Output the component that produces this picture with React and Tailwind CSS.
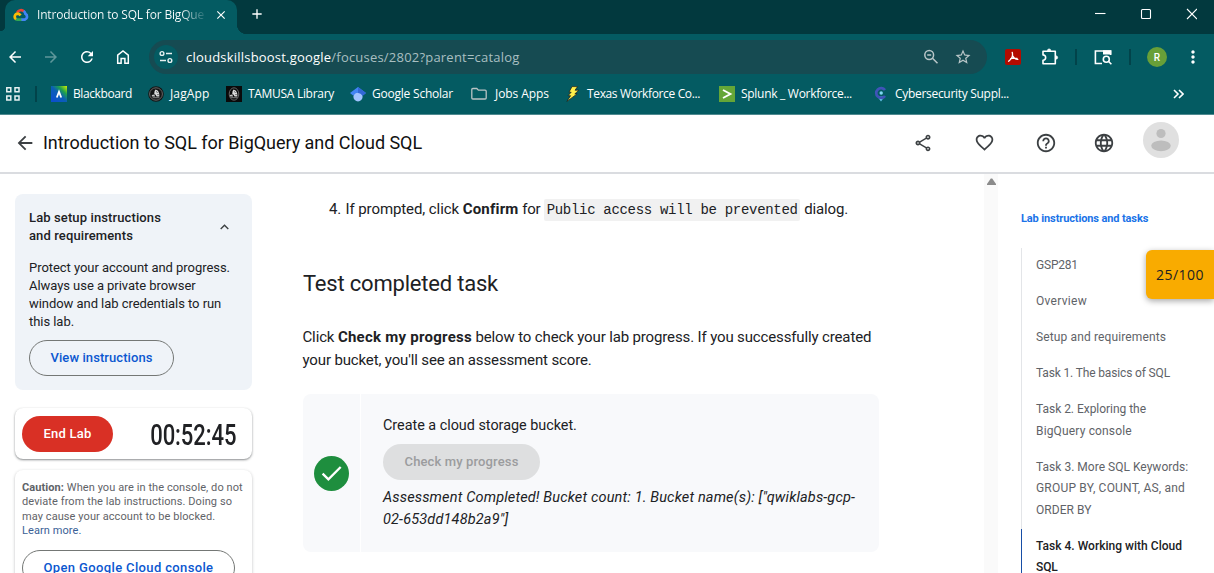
import {
  MdArrowBack, MdArrowForward, MdRefresh, MdOutlineShare, MdFavoriteBorder, MdHelpOutline,
  MdLanguage, MdStarBorder, MdClose, MdAdd, MdMoreVert,
} from 'react-icons/md'

function CloudLogo() {
  return (
    <svg className="h-[14px] w-4 shrink-0" viewBox="0 0 16 14" fill="none" strokeWidth="2.7">
      <path d="M4.2 4.6A4.3 4.3 0 0 1 11 3.4" stroke="#ea4335" />
      <path d="M10.6 3A4.6 4.6 0 0 1 12.4 5.8A3.2 3.2 0 0 1 12 11.6H8" stroke="#4285f4" />
      <path d="M8.4 11.6H4.4A3 3 0 0 1 2.6 11" stroke="#34a853" />
      <path d="M3 11.2A3.1 3.1 0 0 1 4.6 5.6C6 5.6 6.8 6.4 7.6 7.4" stroke="#fbbc04" />
    </svg>
  )
}

function TuneIcon() {
  return (
    <svg className="h-4 w-4" viewBox="0 0 16 16" fill="none" stroke="#e6f0f0" strokeWidth="1.4">
      <circle cx="4" cy="4.5" r="1.9" />
      <path d="M8 4.5h6M2 11.5h6" />
      <circle cx="11.9" cy="11.5" r="1.9" />
    </svg>
  )
}

function BlackboardIcon() {
  return (
    <svg className="h-4 w-4" viewBox="0 0 16 16">
      <defs>
        <linearGradient id="bb" x1="1" y1="0" x2="0.1" y2="0.9">
          <stop offset="0" stopColor="#d5ee00" />
          <stop offset="0.3" stopColor="#1fa34a" />
          <stop offset="0.55" stopColor="#0b5fb5" />
          <stop offset="1" stopColor="#0b4fd0" />
        </linearGradient>
      </defs>
      <path d="M0 0h16v16H0z" fill="url(#bb)" />
      <path d="M5.8 11.5L8 5.8l2.2 5.7" stroke="#fff" strokeWidth="1.8" fill="none" />
    </svg>
  )
}

function JagIcon({ square }) {
  return (
    <svg className="h-4 w-4" viewBox="0 0 16 16">
      {square ? <path d="M0 0h16v16H0z" fill="#0a0a0a" /> : <circle cx="8" cy="8" r="7.8" fill="#141414" />}
      <ellipse cx="8" cy="8" rx={square ? 4.8 : 6.4} ry="6.2" fill="none" stroke="#6f6f6f" strokeWidth="0.9" />
      <path d="M7.6 3.4l2.4 1.4 1.2 2.6.2 3H8.6L7.4 8.600 6.200 8.200 6.600 5z" fill="#dcdcdc" />
      <path d="M3.900 9l2.300-.6 1 2.200H3.900z" fill="#c4c4c4" />
      <path d="M4.600 11.700h6.800" stroke="#8d8d8d" strokeWidth="0.9" />
      <path d="M8.200 5.600l1.300.9M9.400 8.600h1.200" stroke="#141414" strokeWidth="0.800" />
    </svg>
  )
}

function ScholarIcon() {
  return (
    <svg className="h-4 w-4" viewBox="0 0 16 16">
      <circle cx="8" cy="10.8" r="4.6" fill="#a0c3ff" />
      <path d="M8 1L16 7l-3.4 2.7a5 5 0 0 0-9.2 0L0 7z" fill="#4285f4" />
      <path d="M3.4 9.700a5 5 0 0 1 9.200 0 5 5 0 0 0-9.200 0z" fill="#76a7fa" />
      <path d="M8 1l8 6-3.400 2.700A5 5 0 0 0 8 6.900z" fill="#3367d6" />
    </svg>
  )
}

function FolderIcon() {
  return (
    <svg className="h-4 w-4" viewBox="0 0 16 16" fill="none" stroke="#b9c4c5" strokeWidth="1.3">
      <path d="M.8 3.6c0-.7.4-1.1 1.1-1.1h3.9l1.6 1.7h6.700c.7 0 1.100.4 1.100 1.100v6.600c0 .7-.4 1.100-1.100 1.100H1.900c-.7 0-1.100-.4-1.100-1.100z" />
    </svg>
  )
}

function BoltIcon() {
  return (
    <svg className="h-4 w-4" viewBox="0 0 16 16">
      <path d="M7 .6h5.600L10 4.200h3.800L9.800 7.900h2.300L1.900 15.400 5.600 9.700H3l3.200-3.500H4z" fill="#ffef4a" stroke="#1a1a1a" strokeWidth="0.700" />
    </svg>
  )
}

function SplunkIcon() {
  return (
    <svg className="h-4 w-4" viewBox="0 0 16 16">
      <path d="M0 0h16v16H0z" fill="#65a637" />
      <path d="M4 4l7.4 4L4 12" stroke="#fff" strokeWidth="1.9" fill="none" />
    </svg>
  )
}

function PinIcon() {
  return (
    <svg className="h-4 w-4" viewBox="0 0 16 16">
      <path d="M4.400 10.600h7.200L8 15.400z" fill="#63c5ea" />
      <path d="M12 4A4.900 4.900 0 1 0 12 10" stroke="#4054b8" strokeWidth="2.700" fill="none" />
      <circle cx="8.200" cy="7" r="1.700" fill="#7fd8f2" />
    </svg>
  )
}

const bookmarks = [
  { icon: <BlackboardIcon />, label: 'Blackboard', cls: 'w-[97px] gap-1.5 tracking-[-0.4px]' },
  { icon: <JagIcon />, label: 'JagApp', cls: 'w-[78px] gap-1.5 tracking-[0.15px]' },
  { icon: <JagIcon square />, label: 'TAMUSA Library', cls: 'w-[124px] gap-1.5 tracking-[-0.3px]' },
  { icon: <ScholarIcon />, label: 'Google Scholar', cls: 'w-[121px] gap-1.5 tracking-[-0.22px]' },
  { icon: <FolderIcon />, label: 'Jobs Apps', cls: 'w-[94px] gap-2 tracking-[-0.07px]' },
  { icon: <BoltIcon />, label: 'Texas Workforce Co...', cls: 'w-[154px] gap-1.5 tracking-[-0.36px]' },
  { icon: <SplunkIcon />, label: 'Splunk _ Workforce...', cls: 'w-[154px] gap-1.5 tracking-[-0.29px]' },
  { icon: <PinIcon />, label: 'Cybersecurity Suppl...', cls: 'w-[150px] gap-1.5 tracking-[-0.3px]' },
]

function TabStrip() {
  return (
    <div className="flex h-[34px] bg-[#02393e]">
      <div className="relative ml-[5px] flex w-[232px] items-center rounded-t-[10px] bg-[#045b62] pb-[5px] pl-2">
        <CloudLogo />
        <span className="ml-2 w-[168px] whitespace-nowrap bg-gradient-to-r from-white from-85% to-white/10 bg-clip-text text-[12px] tracking-[-0.18px] text-transparent">
          Introduction to SQL for BigQue
        </span>
        <MdClose className="ml-[9px] h-[14px] w-[14px] text-white" />
        <span className="absolute -right-[10px] bottom-0 h-[10px] w-[10px] bg-[radial-gradient(circle_at_100%_0,#02393e_10px,#045b62_10.5px)]" />
        <span className="absolute -left-[5px] bottom-0 h-[8px] w-[5px] bg-[radial-gradient(circle_at_0_0,#02393e_5px,#045b62_5.5px)]" />
      </div>
      <MdAdd className="ml-[12px] mt-[6px] h-4 w-4 text-white" />
      <svg className="ml-auto mr-[17px] mt-[8px] h-3 w-[103px]" viewBox="0 0 103 12" fill="none" stroke="#fff" strokeWidth="1.1">
        <path d="M1 5.5h10.5" />
        <rect x="47.5" y="1.5" width="9" height="9" rx="1" />
        <path d="M93 1l10 10M103 1l-10 10" />
      </svg>
    </div>
  )
}

function Toolbar() {
  return (
    <div className="flex h-[46px] items-center bg-[#045b62] text-white">
      <div className="flex w-[149px] gap-[18px] pl-[6px]">
        <MdArrowBack className="h-[18px] w-[18px]" />
        <MdArrowForward className="h-[18px] w-[18px] text-[#5f979b]" />
        <MdRefresh className="h-[18px] w-[18px]" />
        <svg className="h-[18px] w-[18px]" viewBox="0 0 18 18" fill="none" stroke="#fff" strokeWidth="1.5">
          <path d="M3.700 7.100L9 3l5.300 4.100v8.200H10.900v-4.800H7.100v4.800H3.700z" />
        </svg>
      </div>
      <div className="flex h-[34px] w-[838px] items-center rounded-full bg-[#164b52] pl-[5px]">
        <span className="flex h-6 w-6 items-center justify-center rounded-full bg-[#045b62]">
          <TuneIcon />
        </span>
        <span className="ml-2 mt-px text-[13px] tracking-[0.21px] text-[#a9bfc1]">
          <span className="text-white">cloudskillsboost.google</span>/focuses/2802?parent=catalog
        </span>
        <div className="ml-auto mr-[15px] flex items-center gap-[15px] text-[#b9c6c8]">
          <svg className="h-4 w-4" viewBox="0 0 16 16" fill="none" stroke="currentColor" strokeWidth="1.5">
            <circle cx="6.2" cy="6" r="4.4" />
            <path d="M4.2 6h4M9.5 9.3l5 5" />
          </svg>
          <MdStarBorder className="h-[18px] w-[18px]" />
        </div>
      </div>
      <svg className="ml-[18px] h-4 w-4" viewBox="0 0 16 16">
        <rect width="16" height="16" rx="2" fill="#b30b00" />
        <path d="M7.200 3.300C8.100 6.200 7.500 9 3.600 12.200M7.600 6.700c.9 2.100 2.600 3.400 5.200 3.700M5.700 9.700c1.800-.7 3.900-.9 6.300-.3" fill="none" stroke="#fff" strokeWidth="1.300" strokeLinecap="round" />
      </svg>
      <svg className="ml-5 h-[18px] w-[18px]" viewBox="0 0 18 18" fill="none" stroke="#fff" strokeWidth="1.600" strokeLinejoin="round">
        <path d="M2 3.300H14.300V15.700H2V12.200A2.500 2.500 0 0 0 2 6.900z" />
        <path d="M6.500 2.600a1.600 1.600 0 0 1 3.200 0zM15 7.900a1.600 1.600 0 0 1 0 3.200z" fill="#fff" strokeWidth="0.8" />
      </svg>
      <span className="ml-[16px] h-4 w-[2px] bg-[#02434a]" />
      <svg className="ml-[17px] h-[18px] w-[18px]" viewBox="0 0 18 18" fill="none" stroke="#fff" strokeWidth="1.6">
        <path d="M8 15.500H1.400V3H16.600V7" />
        <path d="M9 2.300h8.300V6.500H9z" fill="#fff" stroke="none" />
        <circle cx="12.300" cy="11.200" r="3" />
        <path d="M14.400 13.300l3 3" />
      </svg>
      <span className="ml-[17px] h-4 w-[2px] bg-[#02434a]" />
      <span className="ml-4 flex h-5 w-5 items-center justify-center rounded-full bg-[#689f38] font-['Roboto'] text-[10px] font-medium">R</span>
      <MdMoreVert className="ml-[16px] h-5 w-5" />
    </div>
  )
}

function BookmarksBar() {
  return (
    <div className="flex h-[35px] items-center border-b border-[#4f8a90] bg-[#045b62] pb-[7px] text-[12px] text-white">
      <svg className="ml-[5px] h-4 w-4" viewBox="0 0 16 16" fill="none" stroke="#e8f2f2" strokeWidth="1.5">
        <path d="M1.800 1.800h4v4h-4zM10 1.800h4v4h-4zM1.800 10h4v4h-4zM10 10h4v4h-4z" />
      </svg>
      <span className="ml-[14px] mr-[14px] h-4 w-[2px] bg-[#02434a]" />
      {bookmarks.map((b) => (
        <div key={b.label} className={`flex shrink-0 items-center whitespace-nowrap ${b.cls}`}>
          {b.icon}
          <span>{b.label}</span>
        </div>
      ))}
      <svg className="ml-auto mr-[30px] h-[10px] w-[11px]" viewBox="0 0 11 10" fill="none" stroke="#fff" strokeWidth="1.6">
        <path d="M1 1l4 4-4 4M6 1l4 4-4 4" />
      </svg>
    </div>
  )
}

function LabHeader() {
  return (
    <header className="flex h-[59px] items-center border-b-2 border-[#dadce0] pb-[2px] text-[#3c4043]">
      <MdArrowBack className="ml-[14px] h-[22px] w-[22px]" />
      <h1 className="ml-[7px] text-[18px] tracking-[-0.04px] text-[#111]">Introduction to SQL for BigQuery and Cloud SQL</h1>
      <div className="ml-auto mr-[35px] flex items-center">
        <MdOutlineShare className="h-5 w-5" />
        <MdFavoriteBorder className="ml-[41px] h-[21px] w-[21px]" />
        <MdHelpOutline className="ml-[40px] h-[22px] w-[22px]" />
        <MdLanguage className="ml-[36px] h-[22px] w-[22px]" />
        <svg className="-mt-[6px] ml-[28px] h-9 w-9" viewBox="0 0 36 36">
          <circle cx="18" cy="18" r="18" fill="#e0e0e0" />
          <circle cx="18" cy="11.500" r="4.600" fill="#bdbdbd" />
          <ellipse cx="18" cy="23.800" rx="9.800" ry="5.400" fill="#bdbdbd" />
        </svg>
      </div>
    </header>
  )
}

function Sidebar() {
  return (
    <aside className="w-[237px] shrink-0 pt-5 text-[13px] leading-[18px] text-[#202124]">
      <section className="h-[196px] rounded-lg bg-[#eff3f8] px-[14px] pt-[15px]">
        <div className="flex items-center justify-between pr-[9px]">
          <h2 className="font-medium tracking-[0.115px]">
            Lab setup instructions
            <br />
            and requirements
          </h2>
          <svg className="h-[6px] w-[9px]" viewBox="0 0 9 6" fill="none" stroke="#3c4043" strokeWidth="1.400">
            <path d="M.7 5l3.800-3.800L8.300 5" />
          </svg>
        </div>
        <p className="mt-[14px] whitespace-nowrap tracking-[-0.05px]">
          Protect your account and progress.
          <br />
          Always use a private browser
          <br />
          window and lab credentials to run
          <br />
          this lab.
        </p>
        <button className="mt-[9px] flex h-9 w-[145px] items-center justify-center rounded-full border border-[#747775] font-medium tracking-[0.08px] text-[#0b57d0]">
          View instructions
        </button>
      </section>
      <section className="mt-[18px] flex h-[51px] items-center justify-between rounded-lg pl-[7px] pr-4 shadow-[0_1px_2px_rgba(60,64,67,0.5),0_1px_3px_rgba(60,64,67,0.15)]">
        <button className="h-9 w-[91px] rounded-full bg-[#d93025] font-medium tracking-[0.2px] text-white">End Lab</button>
        <span className="mt-[2px] origin-right scale-x-[0.76] text-[29px] font-medium tracking-[-0.1px]">00:52:45</span>
      </section>
      <section className="mt-[11px] h-[140px] rounded-lg px-[7px] pt-[11px] shadow-[0_1px_3px_rgba(60,64,67,0.35)]">
        <p className="whitespace-nowrap text-[11px] leading-[14.300px] tracking-[0.08px] text-[#5f6368]">
          <b>Caution:</b> When you are in the console, do not
          <br />
          deviate from the lab instructions. Doing so
          <br />
          may cause your account to be blocked.
          <br />
          <a className="text-[#3b5f96]">Learn more.</a>
        </p>
        <button className="mt-[12px] h-9 w-[213px] rounded-full border border-[#747775] font-medium tracking-[0.360px] text-[#0b57d0]">
          Open Google Cloud console
        </button>
      </section>
    </aside>
  )
}

function LabContent() {
  return (
    <main className="ml-[51px] w-[576px] shrink-0 whitespace-nowrap text-[15px] leading-[23px] tracking-[-0.14px] text-[#202124]">
      <div className="mt-[24px] flex h-[23px] items-center pl-[26px]">
        <span className="w-[16.500px]">4.</span>
        <span className="tracking-[-0.09px]">If prompted, click&nbsp;</span>
        <b className="tracking-[0.2px]">Confirm</b>
        <span>&nbsp;for&nbsp;</span>
        <code className="mr-[4px] flex h-[22px] items-center rounded-[2px] bg-[#f1f1f1] px-[2.500px] pt-px font-['Liberation_Mono',monospace] text-[14px] tracking-[-0.305px]">
          Public access will be prevented
        </code>
        <span>dialog.</span>
      </div>
      <h2 className="mt-[47px] text-[22px] leading-[32px] tracking-[-0.2px]">Test completed task</h2>
      <p className="-ml-[0.500px] mt-[26px]">
        Click <b className="tracking-[0.25px]">Check my progress</b> below to check your lab progress. If you successfully created
        <br />
        your bucket, you'll see an assessment score.
      </p>
      <section className="mt-[22px] flex h-[158px] rounded-lg bg-[#f8f9fb]">
        <div className="flex w-[58px] items-center justify-center border-r border-white">
          <svg className="h-[35px] w-[35px]" viewBox="0 0 35 35">
            <circle cx="17.500" cy="17.500" r="17.500" fill="#1e8e3e" />
            <path d="M8.600 17.600l5.800 5.800L26.700 11" fill="none" stroke="#fff" strokeWidth="2.300" />
          </svg>
        </div>
        <div className="pl-[22px] pt-[21px] text-[14.400px] leading-[22px]">
          <p className="tracking-[-0.02px]">Create a cloud storage bucket.</p>
          <button className="mb-[6px] mt-[7px] block h-9 w-[157px] rounded-full bg-[#dedfe0] text-[13px] font-medium tracking-[0.130px] text-[#9b9c9e]">
            Check my progress
          </button>
          <p className="mt-[7px] text-[14.500px] italic tracking-[0.160px]">
            Assessment Completed! Bucket count: 1. Bucket name(s): ["qwiklabs-gcp-
            <br />
            02-653dd148b2a9"]
          </p>
        </div>
      </section>
    </main>
  )
}

const tasks = [
  [['GSP281', 'tracking-[-0.2px]']],
  [['Overview', 'tracking-[0.3px]']],
  [['Setup and requirements', 'tracking-[0.13px]']],
  [['Task 1. The basics of SQL', 'tracking-[-0.15px]']],
  [['Task 2. Exploring the', 'tracking-[-0.03px]'], ['BigQuery console', 'tracking-[0.16px]']],
  [['Task 3. More SQL Keywords:', 'tracking-[0.02px]'], ['GROUP BY, COUNT, AS, and', 'tracking-[0.2px]'], ['ORDER BY', 'tracking-[0.05px]']],
  [['Task 4. Working with Cloud', 'tracking-[0.02px]'], ['SQL', 'tracking-[-0.1px]']],
]

function Outline() {
  return (
    <nav className="ml-[23px] grow whitespace-nowrap text-[12px] text-[#5f6368]">
      <h3 className="mt-[37px] text-[11px] font-bold leading-4 tracking-[-0.120px] text-[#1a73e8]">Lab instructions and tasks</h3>
      <ul className="mt-[21px]">
        {tasks.map((lines, i) => (
          <li
            key={lines[0][0]}
            className={`border-l px-[14px] py-[7.200px] leading-[21.600px] ${
              i === tasks.length - 1 ? 'border-[#174ea6] font-medium text-[#202124]' : 'border-[#e3e5e8]'
            }`}
          >
            {lines.map(([text, tracking]) => (
              <div key={text} className={tracking}>{text}</div>
            ))}
          </li>
        ))}
      </ul>
    </nav>
  )
}

export default function App() {
  return (
    <div className="relative h-[573px] w-[1214px] overflow-hidden bg-white font-['Roboto',sans-serif]">
      <div className="font-['Open_Sans',sans-serif]">
        <TabStrip />
        <Toolbar />
        <BookmarksBar />
      </div>
      <LabHeader />
      <div className="flex h-[399px] overflow-hidden pl-[15px]">
        <Sidebar />
        <LabContent />
        <div className="ml-[105px] w-[14px] shrink-0 bg-[#fafafa] pt-[4px]">
          <svg className="ml-[3px] h-[7px] w-[9px]" viewBox="0 0 9 7">
            <path d="M3.800.4h1.400L9 6v1H0V6z" fill="#8b8b8b" />
          </svg>
        </div>
        <Outline />
      </div>
      <div className="absolute right-0 top-[250px] flex h-[49px] w-[68px] items-center rounded-l-md bg-[#f9ab00] pl-[10px] font-['Open_Sans',sans-serif] text-[14px] tracking-[0.450px] text-[#202124] shadow-[0_2px_6px_rgba(0,0,0,0.35)]">
        25/100
      </div>
    </div>
  )
}
